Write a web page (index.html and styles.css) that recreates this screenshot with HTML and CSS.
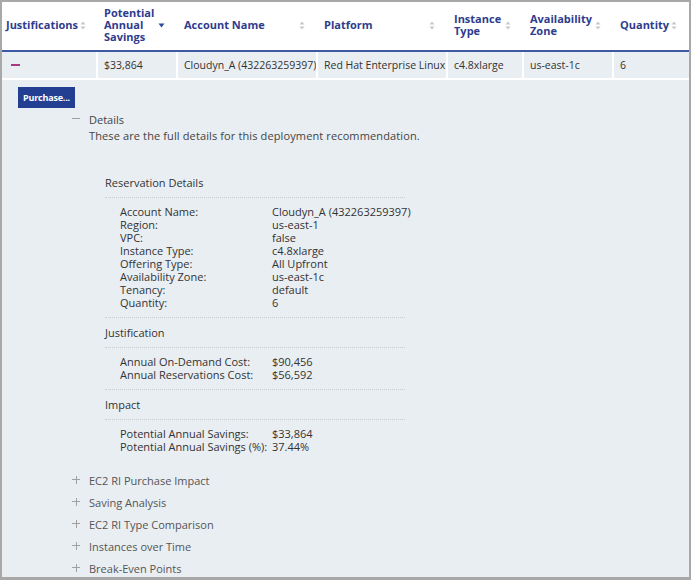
FILE: index.html
```html
<!DOCTYPE html>
<html>
<head>
<meta charset="utf-8">
<link rel="stylesheet" href="styles.css">
</head>
<body>
<div class="frame">
  <table class="grid">
    <colgroup>
      <col class="c1"><col class="c2"><col class="c3"><col class="c4"><col class="c5"><col class="c6"><col class="c7">
    </colgroup>
    <thead>
      <tr>
        <th><div class="th"><span>Justifications</span><span class="sort"><svg width="6" height="9" viewBox="0 0 6 9"><path d="M3 0.5 L5.5 3.5 H0.5 Z M3 8.5 L5.5 5.5 H0.5 Z" fill="#c8c8c8"/></svg></span></div></th>
        <th><div class="th"><span>Potential<br>Annual<br>Savings</span><span class="sort"><svg width="7" height="5" viewBox="0 0 7 5"><path d="M0.5 0.5 H6.5 L3.5 4.5 Z" fill="#2d4a9e"/></svg></span></div></th>
        <th><div class="th"><span>Account Name</span><span class="sort"><svg width="6" height="9" viewBox="0 0 6 9"><path d="M3 0.5 L5.5 3.5 H0.5 Z M3 8.5 L5.5 5.5 H0.5 Z" fill="#c8c8c8"/></svg></span></div></th>
        <th><div class="th"><span>Platform</span><span class="sort"><svg width="6" height="9" viewBox="0 0 6 9"><path d="M3 0.5 L5.5 3.5 H0.5 Z M3 8.5 L5.5 5.5 H0.5 Z" fill="#c8c8c8"/></svg></span></div></th>
        <th><div class="th"><span>Instance<br>Type</span><span class="sort"><svg width="6" height="9" viewBox="0 0 6 9"><path d="M3 0.5 L5.5 3.5 H0.5 Z M3 8.5 L5.5 5.5 H0.5 Z" fill="#c8c8c8"/></svg></span></div></th>
        <th><div class="th"><span>Availability<br>Zone</span><span class="sort"><svg width="6" height="9" viewBox="0 0 6 9"><path d="M3 0.5 L5.5 3.5 H0.5 Z M3 8.5 L5.5 5.5 H0.5 Z" fill="#c8c8c8"/></svg></span></div></th>
        <th><div class="th"><span>Quantity</span><span class="sort"><svg width="6" height="9" viewBox="0 0 6 9"><path d="M3 0.5 L5.5 3.5 H0.5 Z M3 8.5 L5.5 5.5 H0.5 Z" fill="#c8c8c8"/></svg></span></div></th>
      </tr>
    </thead>
    <tbody>
      <tr class="row">
        <td><span class="collapse"></span></td>
        <td>$33,864</td>
        <td>Cloudyn_A (432263259397)</td>
        <td>Red Hat Enterprise Linux</td>
        <td>c4.8xlarge</td>
        <td>us-east-1c</td>
        <td>6</td>
      </tr>
      <tr class="expand">
        <td colspan="7">
          <div class="panel">
            <button class="purchase">Purchase...</button>
            <div class="section">
              <div class="sec-head"><span class="tog minus"></span>Details</div>
              <div class="sec-body">
                <div class="desc">These are the full details for this deployment recommendation.</div>
                <div class="groups">
                  <div class="g-head">Reservation Details</div>
                  <div class="g-rows">
                    <div class="kv"><span class="k">Account Name:</span><span class="v">Cloudyn_A (432263259397)</span></div>
                    <div class="kv"><span class="k">Region:</span><span class="v">us-east-1</span></div>
                    <div class="kv"><span class="k">VPC:</span><span class="v">false</span></div>
                    <div class="kv"><span class="k">Instance Type:</span><span class="v">c4.8xlarge</span></div>
                    <div class="kv"><span class="k">Offering Type:</span><span class="v">All Upfront</span></div>
                    <div class="kv"><span class="k">Availability Zone:</span><span class="v">us-east-1c</span></div>
                    <div class="kv"><span class="k">Tenancy:</span><span class="v">default</span></div>
                    <div class="kv"><span class="k">Quantity:</span><span class="v">6</span></div>
                  </div>
                  <div class="g-head">Justification</div>
                  <div class="g-rows">
                    <div class="kv"><span class="k">Annual On-Demand Cost:</span><span class="v">$90,456</span></div>
                    <div class="kv"><span class="k">Annual Reservations Cost:</span><span class="v">$56,592</span></div>
                  </div>
                  <div class="g-head">Impact</div>
                  <div class="g-rows last">
                    <div class="kv"><span class="k">Potential Annual Savings:</span><span class="v">$33,864</span></div>
                    <div class="kv"><span class="k">Potential Annual Savings (%):</span><span class="v">37.44%</span></div>
                  </div>
                </div>
              </div>
            </div>
            <ul class="more">
              <li><span class="tog plus"></span>EC2 RI Purchase Impact</li>
              <li><span class="tog plus"></span>Saving Analysis</li>
              <li><span class="tog plus"></span>EC2 RI Type Comparison</li>
              <li><span class="tog plus"></span>Instances over Time</li>
              <li><span class="tog plus"></span>Break-Even Points</li>
            </ul>
          </div>
        </td>
      </tr>
    </tbody>
  </table>
</div>
</body>
</html>
```

FILE: styles.css
```css
html, body {
  margin: 0;
  padding: 0;
  background: #ffffff;
}
body {
  font-family: "Open Sans", "Liberation Sans", sans-serif;
  color: #333333;
}
.frame {
  width: 691px;
  height: 580px;
  box-sizing: border-box;
  border: 2px solid #a8a8a8;
  border-bottom-width: 3px;
  background: #e9eef2;
  overflow: hidden;
}
.grid {
  width: 100%;
  border-collapse: collapse;
  table-layout: fixed;
}
.c1 { width: 95px; }
.c2 { width: 80px; }
.c3 { width: 140px; }
.c4 { width: 130px; }
.c5 { width: 76px; }
.c6 { width: 90px; }
.c7 { width: 76px; }

thead th {
  background: #ffffff;
  height: 48px;
  padding: 0;
  border-bottom: 2px solid #3d5aa3;
  text-align: left;
  vertical-align: middle;
  font-weight: 700;
  font-size: 11px;
  line-height: 12px;
  color: #2e3c8e;
}
.th {
  display: flex;
  align-items: center;
  justify-content: space-between;
  gap: 2px;
  padding: 0 12px 0 7px;
  margin-top: -3px;
}
thead th:first-child .th { padding-left: 4px; }
.sort {
  display: flex;
  flex: none;
  margin-top: 2px;
}

.row td {
  height: 26px;
  padding: 0 0 0 6px;
  font-size: 10.5px;
  color: #333333;
  white-space: nowrap;
  overflow: hidden;
  border-left: 2px solid #ffffff;
  border-bottom: 2px solid #ffffff;
  vertical-align: middle;
}
.row td:first-child { border-left: 0; }
.collapse {
  display: block;
  width: 9px;
  height: 2px;
  margin-left: 3px;
  background: #a8397f;
}

.expand td {
  padding: 0;
}
.panel {
  padding: 7px 0 0 16px;
}
.purchase {
  display: block;
  height: 21px;
  width: 57px;
  padding: 0;
  border: 0;
  background: #233f92;
  color: #ffffff;
  font-family: "Open Sans", "Liberation Sans", sans-serif;
  font-weight: 700;
  font-size: 9px;
  letter-spacing: -0.2px;
}
.section {
  margin-left: 53px;
  margin-top: 3px;
}
.sec-head {
  display: flex;
  align-items: center;
  height: 16px;
  font-size: 11px;
  color: #444444;
}
.tog {
  position: relative;
  display: inline-block;
  width: 18px;
  height: 16px;
  flex: none;
}
.tog::before {
  content: "";
  position: absolute;
  left: 1px;
  top: 7px;
  width: 8px;
  height: 1px;
  background: #a0a0a0;
}
.tog.plus::after {
  content: "";
  position: absolute;
  left: 4.5px;
  top: 3.5px;
  width: 1px;
  height: 8px;
  background: #a0a0a0;
}
.sec-body {
  padding-left: 18px;
}
.desc {
  font-size: 11px;
  line-height: 16px;
  color: #444444;
  margin-top: 1px;
  letter-spacing: 0.12px;
}
.groups {
  margin-top: 24px;
  margin-left: 16px;
  width: 300px;
}
.g-head {
  font-size: 11px;
  line-height: 16px;
  padding: 7px 0 6px;
  border-bottom: 1px dotted #c8cdd2;
  color: #333333;
}
.g-rows {
  padding: 7px 0 8px 15px;
  border-bottom: 1px dotted #c8cdd2;
}
.g-rows.last { border-bottom: 0; padding-bottom: 0; }
.kv {
  display: flex;
  font-size: 11px;
  line-height: 13px;
  color: #333333;
  white-space: nowrap;
}
.k { width: 152px; flex: none; }

.more {
  list-style: none;
  margin: 16px 0 0 53px;
  padding: 0;
}
.more li {
  display: flex;
  align-items: center;
  height: 22px;
  font-size: 11px;
  color: #555555;
}
```
